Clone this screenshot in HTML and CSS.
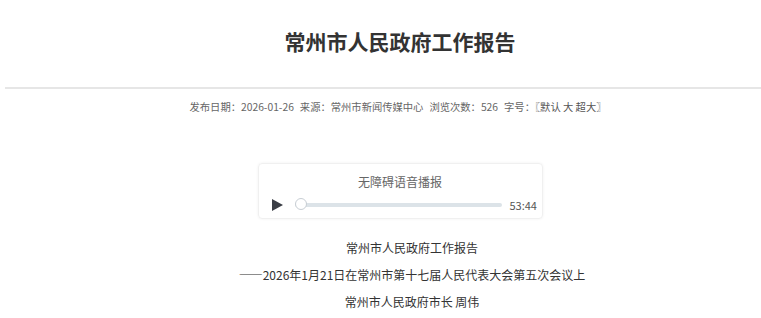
FILE: index.html
```html
<!DOCTYPE html>
<html lang="zh-CN">
<head>
<meta charset="utf-8">
<title>常州市人民政府工作报告</title>
<link rel="stylesheet" href="styles.css">
</head>
<body>
<div class="page">
  <h1 class="title">常州市人民政府工作报告</h1>
  <div class="meta">
    <span class="item">发布日期：2026-01-26</span><span class="item">来源：常州市新闻传媒中心</span><span class="item">浏览次数：526</span><span class="item">字号：<span class="size">〖默认 大 超大〗</span></span>
  </div>
  <div class="player">
    <div class="player-title">无障碍语音播报</div>
    <div class="controls">
      <span class="play"></span>
      <div class="track"><span class="knob"></span></div>
      <span class="time">53:44</span>
    </div>
  </div>
  <div class="content">
    <p>常州市人民政府工作报告</p>
    <p>——2026年1月21日在常州市第十七届人民代表大会第五次会议上</p>
    <p>常州市人民政府市长 周伟</p>
  </div>
</div>
</body>
</html>
```
FILE: styles.css
```css
html, body {
  margin: 0;
  padding: 0;
  background: #fff;
  overflow: hidden;
}
body {
  font-family: "Microsoft YaHei", "Noto Sans CJK SC", "Noto Sans", sans-serif;
  color: #333;
}
.page {
  width: 790px;
  margin-left: 5px;
}
.title {
  margin: 0;
  padding-top: 26px;
  height: 89px;
  box-sizing: border-box;
  text-align: center;
  font-size: 21px;
  line-height: 30px;
  font-weight: bold;
  color: #333;
  border-bottom: 2px solid #e6e6e6;
}
.meta {
  margin-top: 10px;
  text-align: center;
  font-size: 10.3px;
  line-height: 16px;
  color: #666;
  padding-right: 4px;
}
.meta .item {
  margin: 0 3px;
}
.size {
  color: #555;
}
.player {
  width: 285px;
  margin: 48px auto 0;
  height: 56px;
  border: 1px solid #f0f0f0;
  border-radius: 4px;
  box-shadow: 0 0 3px rgba(0,0,0,0.06);
  box-sizing: border-box;
  padding-top: 10px;
}
.player-title {
  text-align: center;
  font-size: 12px;
  line-height: 16px;
  color: #666;
}
.controls {
  display: flex;
  align-items: center;
  margin-top: 9px;
  padding-left: 13px;
}
.play {
  width: 0;
  height: 0;
  border-top: 6px solid transparent;
  border-bottom: 6px solid transparent;
  border-left: 11px solid #3a3e45;
}
.track {
  position: relative;
  margin-left: 12px;
  width: 207px;
  height: 4px;
  border-radius: 2px;
  background: #dce3e8;
}
.knob {
  position: absolute;
  left: 0;
  top: -5px;
  width: 12px;
  height: 12px;
  box-sizing: border-box;
  border: 1px solid #c8ced4;
  border-radius: 50%;
  background: #fff;
}
.time {
  margin-left: 8px;
  font-size: 11px;
  color: #555;
  line-height: 12px;
}
.content {
  margin-top: 15px;
  font-size: 12px;
  color: #333;
}
.content p {
  margin: 0;
  text-align: center;
  text-indent: 2em;
  line-height: 27px;
}
```
